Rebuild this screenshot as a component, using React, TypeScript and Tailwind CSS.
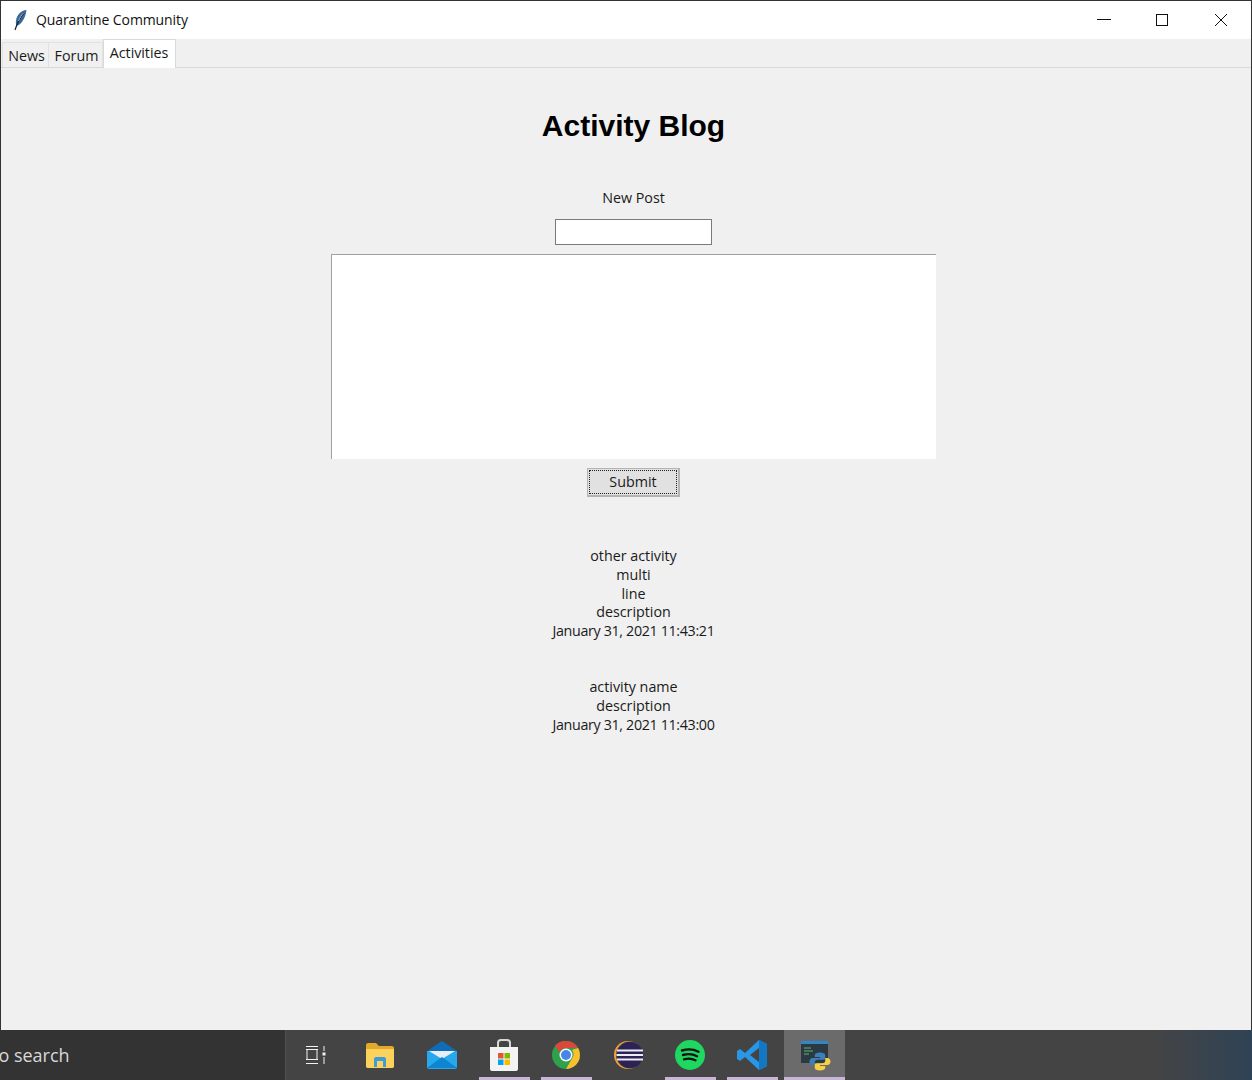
import React from "react";

const uiFont = "font-['Open_Sans','Noto_Sans',sans-serif]";

function Feather() {
  return (
    <svg width="16" height="22" viewBox="0 0 16 22">
      <path d="M14.500 1C9 1.500 5 5.500 4 11.500c-.4 2 0 4 .6 5.500C9 15.500 13.500 10 14.500 1z" fill="#3a6a98" />
      <path d="M12 4C8.500 8 5.500 13 3 21" stroke="#14263a" strokeWidth="1.200" fill="none" />
      <path d="M11.500 4c-2 2-4 5-5 8" stroke="#9dbedd" strokeWidth="1" fill="none" />
    </svg>
  );
}

function WindowButtons() {
  return (
    <div className="flex items-center">
      <div className="flex h-[38px] w-[58px] items-center justify-center">
        <svg width="14" height="14" viewBox="0 0 14 14">
          <path d="M0 6.500h14" stroke="#111" strokeWidth="1" />
        </svg>
      </div>
      <div className="flex h-[38px] w-[58px] items-center justify-center">
        <svg width="14" height="14" viewBox="0 0 14 14">
          <rect x="1.500" y="1.500" width="11" height="11" stroke="#111" fill="none" />
        </svg>
      </div>
      <div className="flex h-[38px] w-[60px] items-center justify-center">
        <svg width="14" height="14" viewBox="0 0 14 14">
          <path d="M1 1l12 12M13 1L1 13" stroke="#111" strokeWidth="1" />
        </svg>
      </div>
    </div>
  );
}

function TaskIcon({ children, underline }: { children: React.ReactNode; underline?: boolean }) {
  return (
    <div className="relative flex h-[50px] w-[62px] items-center justify-center">
      {children}
      {underline && <div className="absolute bottom-0 left-[6px] right-[5px] h-[3px] bg-[#c9b6d6]" />}
    </div>
  );
}

function PythonIcon() {
  const snake = "M10 0C7 0 5 1 5 3v2h5v1H3C1 6 0 8 0 10s1 4 3 4h2v-3c0-2 1-3 3-3h5c1.500 0 2-1 2-2V3c0-2-2-3-5-3z";
  return (
    <svg width="32" height="32" viewBox="0 0 32 32">
      <rect x="2" y="2" width="27" height="22" fill="#2b3a42" />
      <rect x="2" y="2" width="27" height="3" fill="#2f86c9" />
      <path d="M5 9h7M5 12h9M5 15h5" stroke="#63b36b" strokeWidth="1" />
      <g transform="translate(10.500 13.500) scale(1.050 0.900)">
        <path d={snake} fill="#3d7fb8" />
        <path d={snake} fill="#f6cf47" transform="rotate(180 10 10)" />
      </g>
    </svg>
  );
}

function Taskbar() {
  return (
    <div className="flex h-[50px] shrink-0 bg-[linear-gradient(90deg,#444444_0%,#444444_92%,#2f4356_100%)]">
      <div className="flex h-[50px] w-[286px] items-center overflow-hidden border-r border-[#505050] bg-[#333333]">
        <span className={`${uiFont} ml-[-8px] text-[18px] text-[#d8d8d8]`}>to search</span>
      </div>
      <div className="flex w-[63px] items-center justify-center pr-[3px]">
        <svg width="24" height="20" viewBox="0 0 24 20" fill="none" stroke="#f2f2f2" strokeWidth="1">
          <path d="M2 1.500h12M2 4.500h12M2 14.500h12M2 18.500h12M3 5v9M13 5v9M20 1v5M20 12v7" />
          <rect x="18.500" y="7.500" width="3" height="3" fill="#f2f2f2" stroke="none" />
        </svg>
      </div>
      <TaskIcon>
        <svg width="30" height="26" viewBox="0 0 30 26">
          <path d="M1 3c0-1 1-2 2-2h8l3 3h13c1 0 2 1 2 2v18c0 1-1 2-2 2H3c-1 0-2-1-2-2z" fill="#e4a82a" />
          <path d="M1 7h28v17c0 1-1 2-2 2H3c-1 0-2-1-2-2z" fill="#fbd25c" />
          <path d="M9 25v-8c0-1 .5-2 2-2h8c1.500 0 2 1 2 2v8h-3v-6h-6v6z" fill="#3f9bd8" />
        </svg>
      </TaskIcon>
      <TaskIcon>
        <svg width="32" height="28" viewBox="0 0 32 28">
          <path d="M1 10L16 0l15 10v16H1z" fill="#0f6db8" />
          <path d="M1 10h30v16c0 1-1 2-2 2H3c-1 0-2-1-2-2z" fill="#28a8ea" />
          <path d="M3 10h26L16 18z" fill="#e8eef5" />
          <path d="M1 27l15-11 15 11z" fill="#0d85d0" />
        </svg>
      </TaskIcon>
      <TaskIcon underline>
        <svg width="30" height="32" viewBox="0 0 30 32">
          <path d="M9 9V4c0-2 1-3 3-3h6c2 0 3 1 3 3v5" stroke="#d8d8d8" strokeWidth="2" fill="none" />
          <path d="M1 8h28v22c0 1-1 2-2 2H3c-1 0-2-1-2-2z" fill="#f3f3f3" />
          <rect x="9" y="14" width="5.500" height="5.500" fill="#e4572e" />
          <rect x="15.500" y="14" width="5.500" height="5.500" fill="#7fba00" />
          <rect x="9" y="20.500" width="5.500" height="5.500" fill="#00a4ef" />
          <rect x="15.500" y="20.500" width="5.500" height="5.500" fill="#ffb900" />
        </svg>
      </TaskIcon>
      <TaskIcon underline>
        <svg width="28" height="28" viewBox="0 0 28 28">
          <circle cx="14" cy="14" r="14" fill="#2fa04b" />
          <path d="M14 0a14 14 0 0 1 12.100 7H14a7 7 0 0 0-6.500 4.500L3 4.500A14 14 0 0 1 14 0z" fill="#d9483b" />
          <path d="M26.100 7A14 14 0 0 1 14 28l6-10.500A7 7 0 0 0 20 9z" fill="#fbc02d" />
          <circle cx="14" cy="14" r="6.500" fill="#fff" />
          <circle cx="14" cy="14" r="5" fill="#4a86e8" />
        </svg>
      </TaskIcon>
      <TaskIcon>
        <svg width="30" height="28" viewBox="0 0 30 28">
          <circle cx="15" cy="14" r="14" fill="#f1a13a" />
          <circle cx="16.500" cy="14" r="13.500" fill="#444444" />
          <circle cx="17" cy="14" r="13" fill="#2c2255" />
          <path d="M4 9.500h26M3.500 14h27M4 18.500h26" stroke="#ecebf2" strokeWidth="2" />
        </svg>
      </TaskIcon>
      <TaskIcon underline>
        <svg width="30" height="30" viewBox="0 0 30 30">
          <circle cx="15" cy="15" r="15" fill="#1ed760" />
          <path d="M7 10.500c6-1.800 11.500-1.400 16.500 1.200M8 15c5-1.400 9.800-1 14 1.200M9 19.300c4-1.100 8-.8 11.500 1" stroke="#121212" strokeWidth="2.400" strokeLinecap="round" fill="none" />
        </svg>
      </TaskIcon>
      <TaskIcon underline>
        <svg width="32" height="32" viewBox="0 0 32 32">
          <path d="M23 1L31 5v22l-8 4L9 18l-5 4-3-2v-8l3-2 5 4z" fill="#2a97e6" />
          <path d="M23 1L31 5v22l-8 4z" fill="#1278c4" />
          <path d="M23 9v14l-9-7z" fill="#444444" />
        </svg>
      </TaskIcon>
      {/* Running app: highlighted, underline runs the full width */}
      <div className="relative ml-[1px] flex h-[50px] w-[61px] items-center justify-center bg-[#6b6b6b]">
        <PythonIcon />
        <div className="absolute bottom-0 left-0 right-0 h-[3px] bg-[#c9b6d6]" />
      </div>
    </div>
  );
}

export default function App() {
  return (
    <div className={`${uiFont} flex h-[1080px] w-[1252px] flex-col overflow-hidden bg-[#f0f0f0] text-[14.300px] text-[#1a1a1a]`}>
      <div className="flex flex-1 flex-col border-l border-r border-t border-[#333333]">
        {/* Title bar */}
        <div className="flex h-[38px] shrink-0 items-center justify-between bg-white">
          <div className="flex items-center">
            <div className="ml-[11px] mr-[8px] flex w-[16px] justify-center">
              <Feather />
            </div>
            <span className="pb-[1px] text-[14px] tracking-[-0.1px] text-[#111]">Quarantine Community</span>
          </div>
          <WindowButtons />
        </div>

        {/* Tabs */}
        <div className="flex h-[29px] shrink-0 items-end border-b border-[#d9d9d9] pl-[1px]">
          <div className="flex h-[25px] w-[47px] items-center justify-center border border-b-0 border-[#e2e2e2] bg-[#f0f0f0] pl-[2px] pt-[2px]">News</div>
          <div className="flex h-[25px] w-[54px] items-center justify-center border-r border-t border-[#e2e2e2] bg-[#f0f0f0] pl-[2px] pt-[2px]">Forum</div>
          <div className="mb-[-1px] flex h-[29px] w-[73px] items-center justify-center border border-b-0 border-[#d9d9d9] bg-white pb-[2px] pr-[1px] tracking-[-0.05px]">Activities</div>
        </div>

        {/* Activities page */}
        <div className="flex flex-1 flex-col items-center pl-[15px]">
          <h1 className="mt-[40px] h-[36px] text-[30px] leading-[36px] font-bold text-black font-['Liberation_Sans',sans-serif]">Activity Blog</h1>
          <div className="mt-[44px] h-[20px] leading-[20px]">New Post</div>
          <div className="mt-[11px] h-[26px] w-[157px] border border-[#7a7a7a] bg-white" />
          <div className="mt-[9px] h-[205px] w-[605px] border-l border-t border-[#a0a0a0] bg-white" />
          <div className="mt-[9px] h-[29px] w-[93px] border border-b-2 border-r-2 border-[#b4b4b4] bg-[#e1e1e1] p-[1px]">
            <div className="flex h-full w-full items-center justify-center border border-dotted border-[#222]">Submit</div>
          </div>
          <div className="mt-[50px] text-center leading-[18.750px]">
            <p>other activity</p>
            <p>multi</p>
            <p>line</p>
            <p>description</p>
            <p className="tracking-[-0.35px]">January 31, 2021 11:43:21</p>
          </div>
          <div className="mt-[37.500px] text-center leading-[18.750px]">
            <p>activity name</p>
            <p>description</p>
            <p className="tracking-[-0.35px]">January 31, 2021 11:43:00</p>
          </div>
        </div>
      </div>
      <Taskbar />
    </div>
  );
}
